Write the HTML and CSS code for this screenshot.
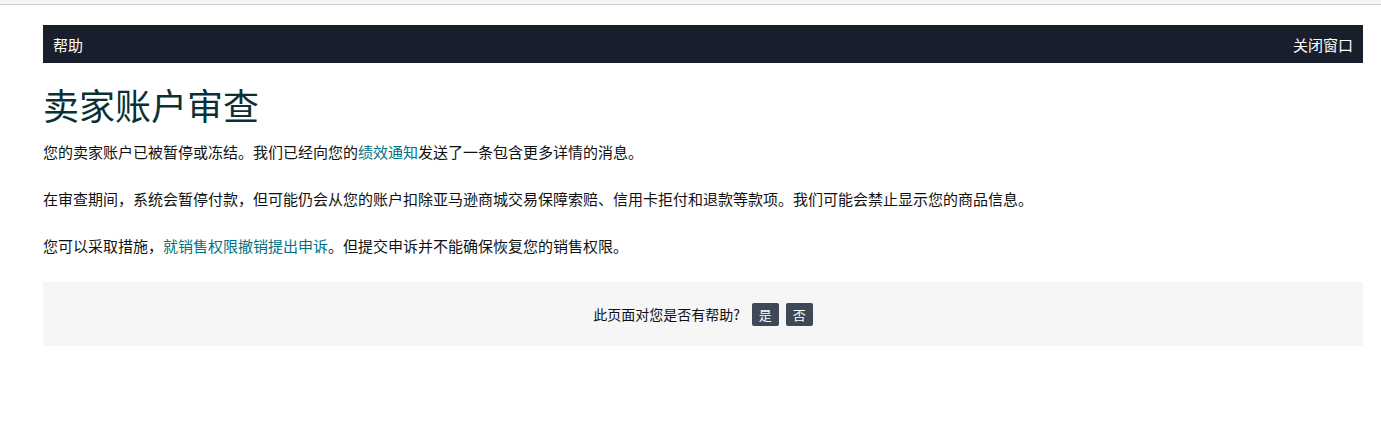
FILE: index.html
```html
<!DOCTYPE html>
<html lang="zh-CN">
<head>
    <meta charset="UTF-8">
    <meta name="viewport" content="width=device-width, initial-scale=1.0">
    <title>卖家账户审查</title>
    <link rel="stylesheet" href="styles.css">
</head>
<body>
    <div class="top-strip"></div>
    <div class="container">
        <div class="help-bar">
            <span>帮助</span>
            <a href="#" class="close-link">关闭窗口</a>
        </div>

        <h1>卖家账户审查</h1>

        <p>您的卖家账户已被暂停或冻结。我们已经向您的<a href="#">绩效通知</a>发送了一条包含更多详情的消息。</p>
        <p>在审查期间，系统会暂停付款，但可能仍会从您的账户扣除亚马逊商城交易保障索赔、信用卡拒付和退款等款项。我们可能会禁止显示您的商品信息。</p>
        <p>您可以采取措施，<a href="#">就销售权限撤销提出申诉</a>。但提交申诉并不能确保恢复您的销售权限。</p>

        <div class="feedback">
            <span class="feedback-text">此页面对您是否有帮助?</span>
            <button type="button">是</button>
            <button type="button">否</button>
        </div>
    </div>
</body>
</html>
```

FILE: styles.css
```css
body {
    font-family: "Noto Sans CJK SC", "Liberation Sans", sans-serif;
    margin: 0;
    background-color: #fff;
    color: #0f1111;
}
.top-strip {
    height: 4px;
    background-color: #f6f6f8;
    border-bottom: 1px solid #d0d0d0;
}
.container {
    margin: 20px 18px 0 43px;
}
.help-bar {
    display: flex;
    justify-content: space-between;
    align-items: center;
    height: 38px;
    padding: 0 10px;
    background-color: #191e2d;
    color: #fff;
    font-size: 15px;
}
.close-link {
    color: #fff;
    text-decoration: none;
}
h1 {
    font-size: 36px;
    font-weight: normal;
    color: #0b3035;
    margin: 16px 0 12px;
    line-height: 50px;
}
p {
    font-size: 15px;
    line-height: 22px;
    margin: 0 0 25px;
}
p a {
    color: #007185;
    text-decoration: none;
}
.feedback {
    display: flex;
    justify-content: center;
    align-items: center;
    gap: 7px;
    height: 64px;
    margin-top: 25px;
    background-color: #f6f6f6;
    font-size: 14px;
}
.feedback-text {
    margin-right: 5px;
}
button {
    width: 27px;
    height: 23px;
    padding: 0;
    border: none;
    border-radius: 2px;
    background-color: #3e4857;
    color: #fff;
    font-family: inherit;
    font-size: 13px;
    cursor: pointer;
}
```
